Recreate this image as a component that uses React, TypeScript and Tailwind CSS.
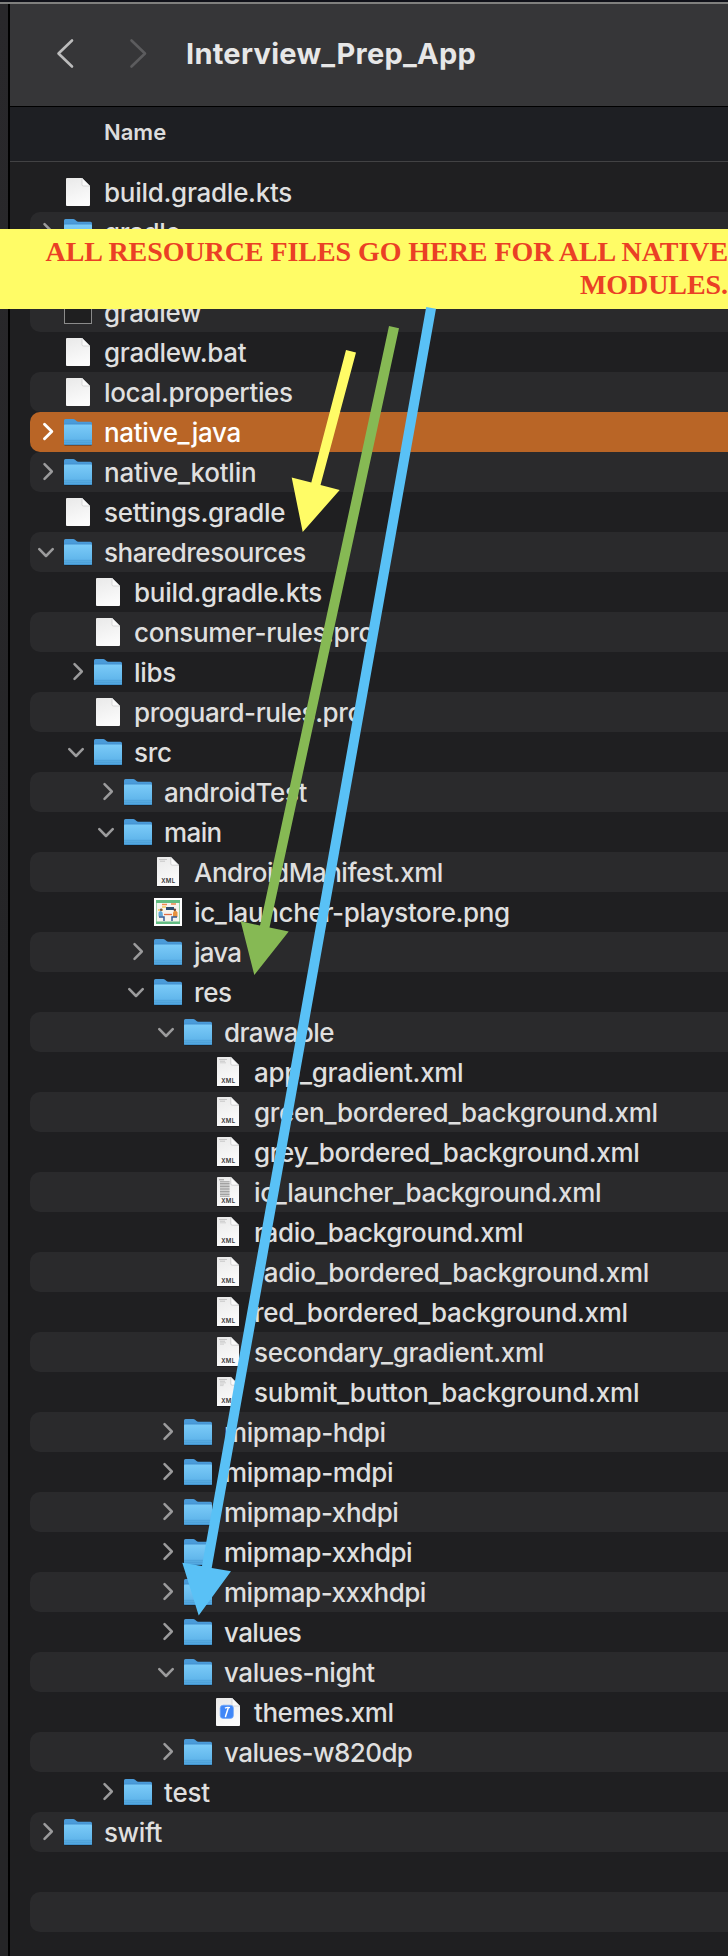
import React from "react";

type Kind = "folder" | "doc" | "xml" | "exec" | "thumb" | "xcode" | "none";
type Item = { name: string; depth: number; kind: Kind; open?: boolean; selected?: boolean; lines?: number; ls?: number };

const items: Item[] = [
  { name: "build.gradle.kts", depth: 0, kind: "doc", ls: -0.28 },
  { name: "gradle", depth: 0, kind: "folder", ls: -0.4 },
  { name: "", depth: 0, kind: "none" },
  { name: "gradlew", depth: 0, kind: "exec", ls: -0.4 },
  { name: "gradlew.bat", depth: 0, kind: "doc", ls: -0.32 },
  { name: "local.properties", depth: 0, kind: "doc", ls: -0.37 },
  { name: "native_java", depth: 0, kind: "folder", selected: true, ls: -0.32 },
  { name: "native_kotlin", depth: 0, kind: "folder", ls: -0.26 },
  { name: "settings.gradle", depth: 0, kind: "doc", ls: -0.26 },
  { name: "sharedresources", depth: 0, kind: "folder", open: true, ls: -0.5 },
  { name: "build.gradle.kts", depth: 1, kind: "doc", ls: -0.28 },
  { name: "consumer-rules.pro", depth: 1, kind: "doc", ls: -0.35 },
  { name: "libs", depth: 1, kind: "folder", ls: -0.3 },
  { name: "proguard-rules.pro", depth: 1, kind: "doc", ls: -0.42 },
  { name: "src", depth: 1, kind: "folder", open: true, ls: -0.3 },
  { name: "androidTest", depth: 2, kind: "folder", ls: -0.4 },
  { name: "main", depth: 2, kind: "folder", open: true, ls: -0.6 },
  { name: "AndroidManifest.xml", depth: 3, kind: "xml", lines: 1, ls: -0.48 },
  { name: "ic_launcher-playstore.png", depth: 3, kind: "thumb", ls: -0.36 },
  { name: "java", depth: 3, kind: "folder", ls: -0.8 },
  { name: "res", depth: 3, kind: "folder", open: true, ls: -0.4 },
  { name: "drawable", depth: 4, kind: "folder", open: true, ls: -0.65 },
  { name: "app_gradient.xml", depth: 5, kind: "xml", lines: 3, ls: -0.3 },
  { name: "green_bordered_background.xml", depth: 5, kind: "xml", lines: 2, ls: -0.29 },
  { name: "grey_bordered_background.xml", depth: 5, kind: "xml", lines: 2, ls: -0.29 },
  { name: "ic_launcher_background.xml", depth: 5, kind: "xml", lines: 12, ls: -0.37 },
  { name: "radio_background.xml", depth: 5, kind: "xml", lines: 3, ls: -0.38 },
  { name: "radio_bordered_background.xml", depth: 5, kind: "xml", lines: 2, ls: -0.29 },
  { name: "red_bordered_background.xml", depth: 5, kind: "xml", lines: 2, ls: -0.28 },
  { name: "secondary_gradient.xml", depth: 5, kind: "xml", lines: 4, ls: -0.32 },
  { name: "submit_button_background.xml", depth: 5, kind: "xml", lines: 5, ls: -0.19 },
  { name: "mipmap-hdpi", depth: 4, kind: "folder", ls: -0.4 },
  { name: "mipmap-mdpi", depth: 4, kind: "folder", ls: -0.4 },
  { name: "mipmap-xhdpi", depth: 4, kind: "folder", ls: -0.46 },
  { name: "mipmap-xxhdpi", depth: 4, kind: "folder", ls: -0.48 },
  { name: "mipmap-xxxhdpi", depth: 4, kind: "folder", ls: -0.5 },
  { name: "values", depth: 4, kind: "folder", ls: -0.65 },
  { name: "values-night", depth: 4, kind: "folder", open: true, ls: -0.42 },
  { name: "themes.xml", depth: 5, kind: "xcode", ls: -0.46 },
  { name: "values-w820dp", depth: 4, kind: "folder", ls: -0.58 },
  { name: "test", depth: 2, kind: "folder", ls: -0.2 },
  { name: "swift", depth: 0, kind: "folder", ls: -0.4 },
  { name: "", depth: 0, kind: "none" },
  { name: "", depth: 0, kind: "none" },
  { name: "", depth: 0, kind: "none" },
];

function Disclosure({ item }: { item: Item }) {
  const color = item.selected ? "#ffffff" : "#9b9b9c";
  return (
    <svg className="h-10 w-4 shrink-0" viewBox="0 0 16 40" fill="none" stroke={color} strokeWidth={item.selected ? 2.9 : 2.5} strokeLinecap="round" strokeLinejoin="round">
      {item.kind === "folder" && (item.open ? <path d="M1.3 17.2 8 24 14.7 17.2" /> : <path d="M6.5 12.2 13.8 19.5 6.5 26.8" />)}
    </svg>
  );
}

function Icon({ item }: { item: Item }) {
  const { kind } = item;
  const lines = item.lines ?? 0;
  return (
    <svg className="h-10 w-7 shrink-0" viewBox="0 0 28 40">
      {kind === "folder" && (
        <>
          <rect x="0.5" y="32" width="27" height="2" fill="#000" opacity="0.3" />
          <path d="M0 8.5Q0 7 1.5 7H9.2Q10.3 7 11.1 7.8L12.2 8.8Q13.1 9.7 14.5 9.7H26.5Q28 9.7 28 11.2V20H0Z" fill="#4a9bd9" />
          <path d="M0.5 12.2H27.5" stroke="#3c88c8" strokeWidth="0.8" />
          <path d="M0 13.5Q0 12.6 1 12.6H27Q28 12.6 28 13.5V32Q28 33 27 33H1Q0 33 0 32Z" fill="url(#folderFront)" />
          <path d="M0 28.4H28M0 30.2H28" stroke="#418fc9" strokeWidth="0.6" opacity="0.7" />
          <path d="M0 32.6H28" stroke="#3b8cc8" strokeWidth="0.8" />
        </>
      )}
      {(kind === "doc" || kind === "xcode") && (
        <>
          <path d="M3 6H18L26 14V33Q26 34 25 34H3Q2 34 2 33V7Q2 6 3 6Z" fill="url(#paper)" />
          <path d="M18 6V12.5Q18 14 19.5 14H26Z" fill="#fafafa" stroke="#c2c2c2" strokeWidth="0.6" />
        </>
      )}
      {kind === "xcode" && (
        <>
          <rect x="6.2" y="13.2" width="13.2" height="13.2" rx="3" fill="#3f86f7" stroke="#6ea8fb" strokeWidth="0.7" />
          <path d="M14.2 16 11.5 24.5" stroke="#fff" strokeWidth="1.5" strokeLinecap="round" />
          <path d="M11 16.2Q12.5 14.8 16 15.6" stroke="#fff" strokeWidth="1.3" fill="none" />
        </>
      )}
      {kind === "xml" && (
        <>
          <rect x="3" y="33" width="22" height="2" fill="#000" opacity="0.3" />
          <path d="M3.8 5H16.8L25 13.2V34H3V5.8Q3 5 3.8 5Z" fill="url(#paper)" />
          {lines === 12 ? (
            <path d="M5 7.8H10M6 9.8H15.6M6 11.4H15.6M6 13H15.6M6 14.6H15.6M6 16.2H15.6M6 17.8H15.6M6 19.4H15.6M6 21H15.6M6 22.6H15.6M6 24.2H15.6" stroke="#999" strokeWidth="1" />
          ) : (
            <>
              <path d="M5 7.5H13M6 9.2H11" stroke="#b5b5b5" strokeWidth="0.7" />
              {lines > 2 && <path d="M6 10.8H12" stroke="#bdbdbd" strokeWidth="0.6" />}
              {lines > 3 && <path d="M6 12.2H10" stroke="#bdbdbd" strokeWidth="0.6" />}
              {lines > 4 && <path d="M6 13.6H9.5" stroke="#bdbdbd" strokeWidth="0.6" />}
            </>
          )}
          <path d="M16.8 5V11.7Q16.8 13.2 18.3 13.2H25Z" fill="#fafafa" stroke="#b8b8b8" strokeWidth="0.6" />
          <text x="14.3" y="31.1" textAnchor="middle" fontSize="6" fontWeight="600" letterSpacing="0.3" fill="#333" fontFamily="Inter, sans-serif">XML</text>
        </>
      )}
      {kind === "exec" && <rect x="0.5" y="4.5" width="27" height="27" fill="#1f1f20" stroke="#8b8b8b" strokeWidth="1" />}
      {kind === "thumb" && (
        <>
          <rect x="0" y="6" width="28" height="28" fill="#fff" />
          <rect x="2" y="8" width="24" height="24" fill="#62bd83" />
          <rect x="2.6" y="11" width="22.8" height="18.5" fill="#f6f4ee" />
          <path d="M8 12.5H13M17 12H22" stroke="#f0884d" strokeWidth="1.3" />
          <path d="M8 15H12M4 18H9" stroke="#f4c95a" strokeWidth="1.4" />
          <rect x="12" y="15" width="8" height="3" fill="#2d4c6e" />
          <path d="M10 22.5H18" stroke="#e26d43" strokeWidth="1.3" />
          <path d="M4.5 24.5V20.5Q6.5 17.5 8.6 20.5L9 24.5Z" fill="#62a8d8" />
          <path d="M19 25V20.5Q21 16.5 23.5 20.5V25Z" fill="#e7923f" />
          <path d="M5 25H10V29M18 29V25H23" stroke="#345b98" strokeWidth="1.5" fill="none" />
          <circle cx="7.2" cy="17.8" r="1.3" fill="#715647" />
          <circle cx="20.8" cy="17.8" r="1.3" fill="#6a4436" />
        </>
      )}
    </svg>
  );
}

function Row({ item, index }: { item: Item; index: number }) {
  const bg = item.selected ? "bg-[#b96526] text-white font-medium" : index % 2 ? "bg-[#2a2a2c] text-[#dfdfdf] font-[450]" : "text-[#dfdfdf] font-[450]";
  return (
    <div className={`flex h-10 shrink-0 items-center rounded-l-[10px] ${bg}`} style={{ paddingLeft: 8 + item.depth * 30 }}>
      <Disclosure item={item} />
      <div className="ml-2.5 flex">
        <Icon item={item} />
      </div>
      <span className="ml-3 pt-0.5 text-[26px] leading-10 whitespace-nowrap" style={{ letterSpacing: item.ls ?? 0 }}>
        {item.name}
      </span>
    </div>
  );
}

export default function App() {
  return (
    <div className="relative flex h-[1956px] w-[728px] flex-col overflow-hidden bg-[#1f1f21] font-['Inter',sans-serif]">
      <svg className="absolute h-0 w-0">
        <defs>
          <linearGradient id="folderFront" x1="0" y1="0" x2="0" y2="1">
            <stop offset="0" stopColor="#7bcbf8" />
            <stop offset="0.7" stopColor="#62b7ec" />
            <stop offset="1" stopColor="#4fa4dc" />
          </linearGradient>
          <linearGradient id="paper" x1="0" y1="0" x2="0.3" y2="1">
            <stop offset="0" stopColor="#e9e9e9" />
            <stop offset="1" stopColor="#fbfbfb" />
          </linearGradient>
        </defs>
      </svg>
      <div className="h-0.5 shrink-0 bg-[#101119]" />
      <div className="h-0.5 shrink-0 bg-[#80807e]" />
      <div className="flex min-h-0 flex-1">
        <div className="w-2 shrink-0 bg-linear-to-b from-[#29282b] via-[#252527] to-[#252527]" />
        <div className="w-0.5 shrink-0 bg-black" />
        <div className="flex min-w-0 flex-1 flex-col">
          <header className="flex h-[103px] shrink-0 items-start border-b border-black bg-[#363638]">
            <svg className="mt-[33px] ml-[45px] h-10 w-[94px] shrink-0" viewBox="0 0 94 40" fill="none" strokeWidth="2.6" strokeLinecap="round" strokeLinejoin="round">
              <path d="M17 3.5 3.5 16.5 17 29.5" stroke="#bcbcbc" />
              <path d="M76.5 3.5 90 16.5 76.5 29.5" stroke="#5c5c5e" />
            </svg>
            <h1 className="mt-[30px] ml-[37px] text-[29px] leading-10 font-bold tracking-[0.28px] whitespace-nowrap text-[#e7e7e7]">Interview_Prep_App</h1>
          </header>
          <div className="flex h-[55px] shrink-0 items-center border-b border-[#424244] bg-[#1e1f23] pb-[5px] pl-[94px]">
            <span className="text-[22px] leading-8 font-semibold text-[#dcdcdc]">Name</span>
          </div>
          <div className="mt-2.5 ml-5 flex flex-col">
            {items.map((item, i) => (
              <Row key={i} item={item} index={i} />
            ))}
          </div>
        </div>
      </div>
      <div className="absolute top-[229px] left-0 flex h-20 w-full flex-col items-end bg-[#fffc66] pt-1.5 font-['Liberation_Serif',serif] text-[28px] leading-[33px] font-bold tracking-[-0.06px] whitespace-nowrap text-[#ea4025]">
        <span>ALL RESOURCE FILES GO HERE FOR ALL NATIVE</span>
        <span>MODULES.</span>
      </div>
      <svg className="absolute inset-0 h-full w-full" viewBox="0 0 728 1956">
        <path d="M346 350 356 352.5 320.5 485 339.7 490 302.7 532 291.7 477.5 311.3 482.5Z" fill="#fffc66" />
        <path d="M389 326 399 328.3 269.5 927.5 288.7 931.5 254.3 975 240.7 921.3 260 925.5Z" fill="#86b954" />
        <path d="M426.2 307 436 308.7 211.7 1568 231 1571.3 198.7 1615.5 182.3 1562.7 202 1566Z" fill="#59c1f6" />
      </svg>
    </div>
  );
}
